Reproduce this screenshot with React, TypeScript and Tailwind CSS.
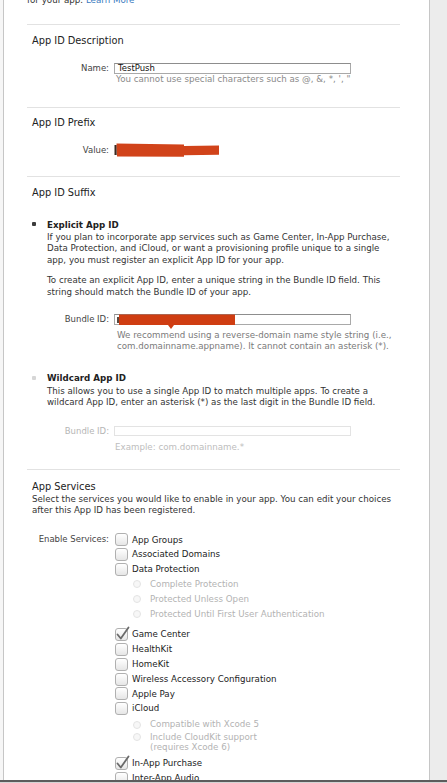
import React from "react";

const Checkbox = ({ checked = false }: { checked?: boolean }) => (
  <div className="relative w-[13px] h-[13px] shrink-0 rounded-[3px] border border-[#b0b0b0] bg-gradient-to-b from-white to-[#e6e6e6]">
    {checked && (
      <svg className="absolute left-[0px] top-[-3px]" width="14" height="15" viewBox="0 0 14 15">
        <path d="M1.5 8.5 L4.8 12.5 L12.5 1.5" fill="none" stroke="#6a6a6a" strokeWidth="1.8" strokeLinecap="round" strokeLinejoin="round" />
      </svg>
    )}
  </div>
);

const Radio = () => (
  <div className="w-[8px] h-[8px] shrink-0 rounded-full border border-[#e4e4e4] bg-[#f7f7f7]" />
);

function CheckRow({ label, checked }: { label: string; checked?: boolean }) {
  return (
    <div className="flex items-center h-[14.8px]">
      <Checkbox checked={checked} />
      <span className="ml-[4px] text-[#222] leading-none">{label}</span>
    </div>
  );
}

function RadioRow({ label }: { label: string }) {
  return (
    <div className="flex items-center h-[15px] pl-[18px]">
      <Radio />
      <span className="ml-[9px] text-[#b3b3b3] leading-none">{label}</span>
    </div>
  );
}

function Rule() {
  return <div className="h-px w-[373px] bg-[#e2e2e2]" />;
}

export default function App() {
  return (
    <div className="w-[447px] h-[783px] overflow-hidden bg-white flex flex-col font-['DejaVu_Sans',sans-serif] text-[8.7px] text-[#333]">
      <div className="flex h-[780px] min-h-0">
        <div className="w-[3px] bg-[#f6f6f6]" />
        <div className="w-[427px] border-l border-r border-[#c6c6c6] bg-white overflow-hidden pl-[23px]">
          {/* intro tail */}
          <div className="mt-[-6px] h-[12px] leading-[12px]">
            for your app. <span className="text-[#3a7bc0]">Learn More</span>
          </div>
          <div className="mt-[18px]">
            <Rule />
          </div>

          {/* description */}
          <div className="pt-[9px] pb-[22px]">
            <h2 className="pl-[5px] h-[14px] leading-[14px] text-[9.8px] text-[#222]">App ID Description</h2>
            <div className="mt-[15px] flex items-center h-[11px]">
              <span className="w-[82px] text-right text-[#444] text-[8.5px]">Name:</span>
              <div className="ml-[5px] w-[237px] h-[11px] border border-[#a9a9a9] border-t-[#8d8d8d] flex items-center pl-[3px] text-[#111] text-[8.5px]">
                TestPush
              </div>
            </div>
            <p className="pl-[89px] leading-[11px] text-[#8a8a8a]">You cannot use special characters such as @, &amp;, *, ', "</p>
          </div>
          <Rule />

          {/* prefix */}
          <div className="pt-[8px] pb-[20px]">
            <h2 className="pl-[5px] h-[14px] leading-[14px] text-[9.8px] text-[#222]">App ID Prefix</h2>
            <div className="mt-[14px] flex items-center h-[12px]">
              <span className="w-[82px] text-right text-[#444] text-[8.5px]">Value:</span>
              <svg className="ml-[5px]" width="108" height="15" viewBox="0 0 108 15">
                <rect x="0.5" y="2" width="2.2" height="10" fill="#3a2a22" />
                <path d="M2.5 0.5 L70 1.5 L70 3 L105 2.5 L105 11.8 L70 12.2 L70 13.8 L3 13.5 Z" fill="#d1431a" />
              </svg>
            </div>
          </div>
          <Rule />

          {/* suffix */}
          <div className="pt-[9px] pb-[16px]">
            <h2 className="pl-[5px] h-[14px] leading-[14px] text-[9.8px] text-[#222]">App ID Suffix</h2>

            <div className="mt-[19px] flex">
              <div className="w-[20px] pl-[5px] pt-[3px]">
                <div className="w-[4px] h-[4px] rounded-[1px] bg-[#3c3c3c]" />
              </div>
              <div>
                <div className="h-[12px] leading-[12px] font-bold text-[#222]">Explicit App ID</div>
                <p className="mt-[1px] leading-[11.3px]">
                  If you plan to incorporate app services such as Game Center, In-App Purchase,
                  <br />
                  Data Protection, and iCloud, or want a provisioning profile unique to a single
                  <br />
                  app, you must register an explicit App ID for your app.
                </p>
                <p className="mt-[9.4px] leading-[11.3px]">
                  To create an explicit App ID, enter a unique string in the Bundle ID field. This
                  <br />
                  string should match the Bundle ID of your app.
                </p>
              </div>
            </div>

            <div className="mt-[16px] flex items-center h-[11px]">
              <span className="w-[82px] text-right text-[#444] text-[8.5px]">Bundle ID:</span>
              <div className="relative ml-[5px] w-[237px] h-[11px] border border-[#a9a9a9] border-t-[#8d8d8d]">
                <svg className="absolute left-[1px] top-[-1px]" width="122" height="17" viewBox="0 0 122 17">
                  <rect x="1" y="3" width="2" height="6" fill="#5a4a40" />
                  <path d="M3 0.5 L119 0.5 L119 11 L58 11 L55 15 L52 11 L3 11 Z" fill="#cf3d12" />
                </svg>
              </div>
            </div>
            <p className="mt-[5.5px] pl-[90px] leading-[10.5px] text-[#7a7a7a]">
              We recommend using a reverse-domain name style string (i.e.,
              <br />
              com.domainname.appname). It cannot contain an asterisk (*).
            </p>

            <div className="mt-[21px] flex">
              <div className="w-[20px] pl-[5px] pt-[4px]">
                <div className="w-[4px] h-[4px] rounded-[1px] bg-[#d6d6d6]" />
              </div>
              <div>
                <div className="h-[12px] leading-[12px] font-bold text-[#222]">Wildcard App ID</div>
                <p className="mt-[1.5px] leading-[11.3px]">
                  This allows you to use a single App ID to match multiple apps. To create a
                  <br />
                  wildcard App ID, enter an asterisk (*) as the last digit in the Bundle ID field.
                </p>
              </div>
            </div>

            <div className="mt-[17px] flex items-center h-[11px]">
              <span className="w-[82px] text-right text-[#b5b5b5] text-[8.5px]">Bundle ID:</span>
              <div className="ml-[5px] w-[237px] h-[10px] border border-[#e3e3e3]" />
            </div>
            <p className="mt-[6px] pl-[88px] leading-[11px] text-[#bdbdbd]">Example: com.domainname.*</p>
          </div>
          <Rule />

          {/* services */}
          <div className="pt-[10px]">
            <h2 className="pl-[5px] h-[14px] leading-[14px] text-[9.8px] text-[#222]">App Services</h2>
            <p className="pl-[5px] leading-[11px]">
              Select the services you would like to enable in your app. You can edit your choices
              <br />
              after this App ID has been registered.
            </p>

            <div className="mt-[16px] flex">
              <div className="w-[82px] h-[14.8px] flex items-center justify-end text-[#444] text-[8.5px]">Enable Services:</div>
              <div className="ml-[6px]">
                <CheckRow label="App Groups" />
                <CheckRow label="Associated Domains" />
                <CheckRow label="Data Protection" />
                <RadioRow label="Complete Protection" />
                <RadioRow label="Protected Unless Open" />
                <RadioRow label="Protected Until First User Authentication" />
                <div className="mt-[5.5px]">
                  <CheckRow label="Game Center" checked />
                  <CheckRow label="HealthKit" />
                  <CheckRow label="HomeKit" />
                  <CheckRow label="Wireless Accessory Configuration" />
                  <CheckRow label="Apple Pay" />
                  <CheckRow label="iCloud" />
                </div>
                <div className="mt-[2px] flex items-center h-[13px] pl-[18px]">
                  <Radio />
                  <span className="ml-[9px] text-[#b3b3b3] leading-none">Compatible with Xcode 5</span>
                </div>
                <div className="mt-[1px] flex pl-[18px]">
                  <div className="pt-[1px]">
                    <Radio />
                  </div>
                  <span className="ml-[9px] text-[#b3b3b3] leading-[10.3px]">
                    Include CloudKit support
                    <br />
                    (requires Xcode 6)
                  </span>
                </div>
                <div className="mt-[3.7px]">
                  <CheckRow label="In-App Purchase" checked />
                  <CheckRow label="Inter-App Audio" />
                </div>
              </div>
            </div>
          </div>
        </div>
        <div className="flex-1 bg-[#ececec]" />
      </div>
      <div className="h-[3px] border-t-2 border-[#5c5c5c] bg-[#d4d4d4]" />
    </div>
  );
}
